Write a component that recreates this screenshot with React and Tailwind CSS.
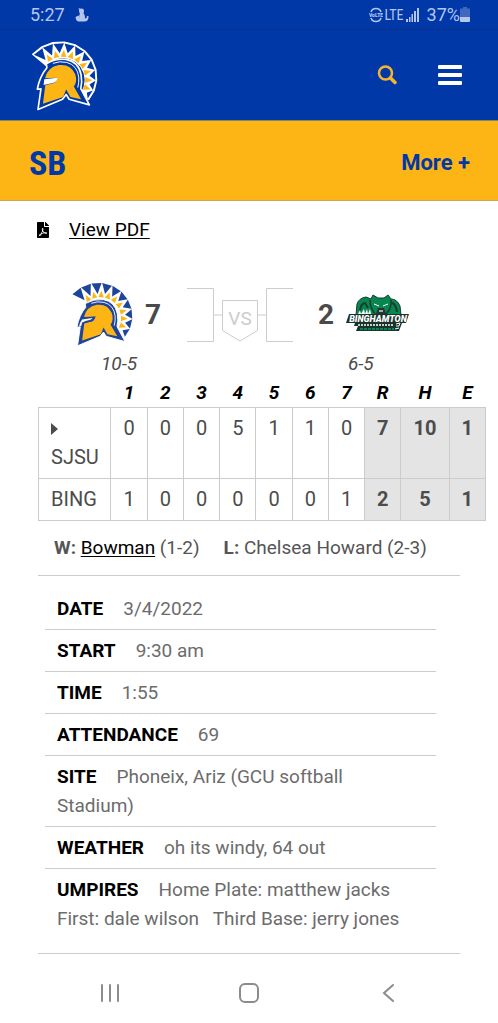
import React from 'react';
import { FaFilePdf } from 'react-icons/fa';

const innings = ['1', '2', '3', '4', '5', '6', '7'];

const teams = [
  { name: 'SJSU', batting: true, runs: [0, 0, 0, 5, 1, 1, 0], totals: [7, 10, 1] },
  { name: 'BING', batting: false, runs: [1, 0, 0, 0, 0, 0, 1], totals: [2, 5, 1] },
];

const details = [
  { label: 'Date', value: '3/4/2022' },
  { label: 'Start', value: '9:30 am' },
  { label: 'Time', value: '1:55' },
  { label: 'Attendance', value: '69' },
  { label: 'Site', value: 'Phoneix, Ariz (GCU softball Stadium)' },
  { label: 'Weather', value: 'oh its windy, 64 out' },
  { label: 'Umpires', value: 'Home Plate: matthew jacks First: dale wilson \u00a0 Third Base: jerry jones' },
];

// Point on the helmet crest, angle in degrees
const crestPoint = (radius, angle) => {
  const rad = (angle * Math.PI) / 180;
  return `${(128 + radius * Math.cos(rad)).toFixed(1)},${(150 + radius * Math.sin(rad)).toFixed(1)}`;
};

const TEETH = 10;
const START = -140;
const STEP = 17.8;
const outerRadius = (i) => 116 - i * 1.5;

const SpartanLogo = ({ className, outlined }) => {
  const blue = outlined ? '#0038a8' : '#1f449c';
  const teeth = [...Array(TEETH)].map((_, i) => i);
  const outer = [...Array(TEETH + 1)].map((_, i) => crestPoint(outerRadius(i), START + i * STEP));
  const inner = [...Array(TEETH + 1)].map((_, i) => crestPoint(62 + i, START + i * STEP)).reverse();

  return (
    <svg viewBox="34 30 202 216" className={className} role="img" aria-label="San Jose State Spartans">
      <polygon
        points={[...outer, ...inner].join(' ')}
        fill="#fff"
        stroke="#fff"
        strokeWidth={outlined ? 4 : 0}
        strokeLinejoin="round"
      />
      {teeth.map((i) => (
        <polygon
          key={i}
          fill={blue}
          points={[
            crestPoint(outerRadius(i) - (outlined ? 4 : -2), START + i * STEP + 0.5),
            crestPoint(outerRadius(i + 1) - (outlined ? 4 : -2), START + (i + 1) * STEP - 0.5),
            crestPoint(76 + i, START + (i + 0.5) * STEP),
          ].join(' ')}
        />
      ))}
      {teeth.slice(1).map((i) => (
        <polygon
          key={i}
          fill="#fdb515"
          points={[
            crestPoint(66 + i * 0.5, START + (i - 0.42) * STEP),
            crestPoint(66 + i * 0.5, START + (i + 0.42) * STEP),
            crestPoint(87 + i * 0.5, START + i * STEP),
          ].join(' ')}
        />
      ))}
      {/* helmet shell */}
      <path
        d="M53 181 Q60 142 82 116 L80 104 Q108 88 139 91 Q177 97 185 137 Q189 160 184 179 L210 228 L149 211 L140 197 L129 211 L55 242 L64 180 Z"
        fill={blue}
        stroke="#fff"
        strokeWidth={outlined ? 5 : 3}
        strokeLinejoin="round"
      />
      <path d="M100 103 Q120 95 142 100 Q174 109 178 145 Q179 162 175 176" fill="none" stroke="#fff" strokeWidth="3" />
      {/* face plate */}
      <path
        d="M76 148 Q84 114 118 108 Q153 104 167 135 Q175 158 163 173 L185 211 L153 204 L140 182 L131 204 L70 225 L77 169 L106 161 L113 146 Z"
        fill="#fdb515"
      />
      <path d="M74 151 L114 146 Q111 161 96 163 L72 168 Z" fill={outlined ? '#fff' : blue} />
      {!outlined && <path d="M60 178 Q63 165 70 156 L104 151 Q100 158 84 160 L70 166 L67 177 Z" fill="#fff" />}
    </svg>
  );
};

const BearcatsLogo = ({ className }) => (
  <svg viewBox="0 0 64 40" className={className} role="img" aria-label="Binghamton Bearcats">
    <path
      d="M10 21 L11 10 Q13 4 20 3 L25 5 L27 1 L32 4 L38 4 L42 1 L45 5 Q51 5 54 12 L55 21 Z"
      fill="#07864f"
      stroke="#173c30"
      strokeWidth="1"
    />
    <path d="M14 18 Q14 10 19 9 L22 14 M46 9 Q50 10 51 18" fill="none" stroke="#173c30" strokeWidth="2" />
    <path d="M24 6 Q24 14 29 20 M45 6 Q46 14 40 20" fill="none" stroke="#173c30" strokeWidth="1.500" />
    <path d="M28 10 L33 12 M42 10 L37 12" stroke="#fff" strokeWidth="1" />
    <path d="M32 14 H38 L40 20 H30 Z" fill="#26332e" />
    <path d="M33 16 H37 V18 H33 Z" fill="#a5a9a9" />
    <path d="M12 20 L14 16 L15 20 L18 15 L19 20 L21 15 L22 20 L24 15 L25 20 Z" fill="#fff" />
    {/* name plate */}
    <path d="M3 20 H63 L60 29 H56 L53 37 H10 L12 32 H8 L9 29 H0 Z" fill="#18342b" />
    <text x="32" y="28" textAnchor="middle" fill="#fff" fontSize="9" fontWeight="900" fontStyle="italic" fontFamily="Roboto, sans-serif">
      BINGHAMTON
    </text>
    <path d="M12 31 H48" stroke="#c5cfcb" strokeWidth="2" strokeDasharray="2 1" />
    <path d="M14 35 H48" stroke="#07864f" strokeWidth="2" strokeDasharray="3 1" />
    <path d="M50 30 L54 29 L53 32 L50 32 M49 35 L53 34" fill="none" stroke="#fff" strokeWidth="1" />
  </svg>
);

const StatusBar = () => (
  <div className="flex h-[30px] items-center justify-between border-b border-[#0a2f86] bg-[#0038a8] pr-7 pl-[30px] text-[#b4c5f0]">
    <div className="flex items-center gap-2.5">
      <span className="text-[18px] leading-5">5:27</span>
      <svg viewBox="0 0 14 14" className="h-3.5 w-3.5" fill="currentColor" aria-hidden="true">
        <circle cx="6.500" cy="3" r="2.500" />
        <path d="M3.500 0 L6 1 L4.500 3 Z" />
        <path d="M5 5 H8.500 Q10.500 8 10 11 H4.500 Q3.500 8 5 5 Z" />
        <path d="M0.500 9 L3.500 7.500 L5 10.500 H10 Q12 10.500 12 8 L13.500 8 Q14 13.500 9 13.500 H4 Q1 13.500 0.500 9 Z" />
      </svg>
    </div>
    <div className="flex items-center">
      <svg viewBox="0 0 14 16" className="h-4 w-3.5" aria-hidden="true">
        <path d="M2 5 Q3 1.500 7 1.500 Q11 1.500 12 5 M2 11 Q3 14.500 7 14.500 Q11 14.500 12 11" fill="none" stroke="currentColor" strokeWidth="1.500" />
        <text x="7" y="10" textAnchor="middle" fontSize="5" fontWeight="900" fontFamily="Roboto, sans-serif" fill="currentColor">VoLTE</text>
      </svg>
      <span className="ml-0.5 font-['Roboto_Condensed',Roboto,sans-serif] text-[14px] leading-4">LTE</span>
      <svg viewBox="0 0 13 14" className="ml-0.5 h-3.5 w-[13px]" fill="currentColor" aria-hidden="true">
        <path d="M0 11h2v3H0zM3 9h1.500v5H3zM5.500 6H7v8H5.500zM8 3h2v11H8zM11 0h2v14h-2z" />
      </svg>
      <span className="ml-2 text-[18px] leading-5">37%</span>
      <svg viewBox="0 0 10 15" className="h-[15px] w-2.5" fill="currentColor" aria-hidden="true">
        <path d="M3 0h4v1.500h3V10H0V1.500h3z" opacity="0.350" />
        <path d="M0 10h10v4a1 1 0 0 1-1 1H1a1 1 0 0 1-1-1z" />
      </svg>
    </div>
  </div>
);

const Header = () => (
  <header className="flex h-[91px] items-center justify-between border-b border-[#8c8559] bg-[#0038a8] pr-9 pl-[31px]">
    <a href="#home">
      <SpartanLogo outlined className="h-[72px] w-[67px]" />
    </a>
    <div className="flex items-center gap-10">
      <button type="button" aria-label="Search" className="text-[#f6b431]">
        <svg viewBox="0 0 21 21" className="h-[21px] w-[21px]" fill="none" stroke="currentColor" strokeLinecap="round" aria-hidden="true">
          <circle cx="8.500" cy="8" r="6.500" strokeWidth="2.500" />
          <path d="M13.500 13 L18 17.500" strokeWidth="3.500" />
        </svg>
      </button>
      <button type="button" aria-label="Menu" className="text-white">
        <svg viewBox="0 0 24 20" className="h-5 w-6" fill="currentColor" aria-hidden="true">
          <rect y="0" width="24" height="4" rx="1" />
          <rect y="8" width="24" height="4" rx="1" />
          <rect y="16" width="24" height="4" rx="1" />
        </svg>
      </button>
    </div>
  </header>
);

const VersusBracket = () => (
  <svg viewBox="0 0 106 56" className="h-14 w-[106px]" fill="none" stroke="#ccc" aria-label="versus">
    <path d="M0 1.500 H26.500 V54.500 H0 M26.500 28 H35.500 M106 1.500 H79.500 V54.500 H106 M79.500 28 H70.500" />
    <path d="M35.500 13.500 H70.500 V43.500 L53 54 L35.500 43.500 Z" />
    <text x="53" y="38" textAnchor="middle" fontSize="19" fontFamily="Roboto, sans-serif" fill="#ccc" stroke="none">VS</text>
  </svg>
);

const LineScore = () => (
  <table className="w-full border-collapse text-center text-[20px] text-[#4c4c4c]">
    <colgroup>
      <col className="w-[72px]" />
      {innings.map((inning) => (
        <col key={inning} className="w-9" />
      ))}
      <col className="w-9" />
      <col className="w-12" />
      <col className="w-9" />
    </colgroup>
    <thead>
      <tr className="text-black italic">
        <td></td>
        {[...innings, 'R', 'H', 'E'].map((heading) => (
          <th key={heading} scope="col" className="text-[19px] leading-[29px] font-bold">{heading}</th>
        ))}
      </tr>
    </thead>
    <tbody>
      {teams.map((team) => (
        <tr key={team.name} className="align-top">
          <th scope="row" className="border border-[#ccc] py-1.5 pl-3 text-left font-normal">
            {team.batting && (
              <span className="flex h-[29px] items-center">
                <svg viewBox="0 0 7 12" className="h-3 w-[7px]" fill="currentColor" aria-hidden="true">
                  <path d="M0 0 L7 6 L0 12 Z" />
                </svg>
              </span>
            )}
            {team.name}
          </th>
          {team.runs.map((run, i) => (
            <td key={i} className="border border-[#ccc] py-1.5">{run}</td>
          ))}
          {team.totals.map((total, i) => (
            <td key={i} className="border border-[#ccc] bg-[#e4e4e4] py-1.5 font-bold">{total}</td>
          ))}
        </tr>
      ))}
    </tbody>
  </table>
);

const NavigationBar = () => (
  <nav className="flex h-[68px] items-center justify-around px-10 pt-2.5 text-[#8c8c8c]">
    <button type="button" aria-label="Recent apps">
      <svg viewBox="0 0 20 20" className="h-5 w-5" fill="none" stroke="currentColor" strokeWidth="2" strokeLinecap="round">
        <path d="M2 2 V18 M10 2 V18 M18 2 V18" />
      </svg>
    </button>
    <button type="button" aria-label="Home">
      <svg viewBox="0 0 20 20" className="h-5 w-5" fill="none" stroke="currentColor" strokeWidth="2">
        <rect x="1" y="1" width="18" height="18" rx="5" />
      </svg>
    </button>
    <button type="button" aria-label="Back">
      <svg viewBox="0 0 20 20" className="h-5 w-5" fill="none" stroke="currentColor" strokeWidth="2" strokeLinecap="round">
        <path d="M15 2 L6 10 L15 18" />
      </svg>
    </button>
  </nav>
);

const App = () => {
  return (
    <div className="bg-white font-['Roboto',sans-serif] text-[19px] leading-[29px]">
      <StatusBar />
      <Header />

      {/* Sport bar */}
      <div className="flex h-20 items-center justify-between border-b border-[#c9a45a] bg-[#fdb515] pt-1 pr-7 pl-[29px] font-bold text-[#0038a8]">
        <h1 className="font-['Roboto_Condensed',Roboto,sans-serif] text-[34px] leading-10">SB</h1>
        <button type="button" className="text-[22px]">More +</button>
      </div>

      <main>
        <div className="flex items-center gap-5 pt-3.5 pl-[37px]">
          <FaFilePdf className="w-3" size={16} />
          <a href="#pdf" className="text-black underline underline-offset-2">View PDF</a>
        </div>

        {/* Score */}
        <div className="flex items-start justify-between pt-[38px] pr-[88px] pl-[71px]">
          <div className="flex flex-col">
            <div className="flex h-16 items-center gap-3">
              <SpartanLogo className="h-[66px] w-[62px]" />
              <span className="text-[28px] font-bold text-[#4a4a4a]">7</span>
            </div>
            <span className="pt-[3px] pl-[30px] text-[#4c4c4c] italic">10-5</span>
          </div>
          <div className="flex h-[66px] items-center">
            <VersusBracket />
          </div>
          <div className="flex flex-col">
            <div className="flex h-16 items-center gap-3">
              <span className="text-[28px] font-bold text-[#4a4a4a]">2</span>
              <BearcatsLogo className="h-10 w-16" />
            </div>
            <span className="pt-[3px] pl-[30px] text-[#4c4c4c] italic">6-5</span>
          </div>
        </div>

        <div className="pr-3 pl-[38px]">
          <LineScore />
        </div>

        {/* Pitchers of record */}
        <div className="mx-[38px] flex gap-6 border-b border-[#ccc] pt-3 pb-[13px] pl-4 text-[#555]">
          <p>
            <strong>W:</strong> <a href="#bowman" className="text-black underline underline-offset-2">Bowman</a> (1-2)
          </p>
          <p>
            <strong>L:</strong> Chelsea Howard (2-3)
          </p>
        </div>

        {/* Game details */}
        <div className="mx-[38px] border-b border-[#ccc] pt-3 pr-6 pb-3.5 pl-[7px]">
          <dl className="divide-y divide-[#ccc]">
            {details.map((item) => (
              <div key={item.label} className="py-1.5 pr-6 pl-3">
                <dt className="mr-5 inline font-bold text-black uppercase">{item.label}</dt>
                <dd className="inline text-[#6c6c6c]">{item.value}</dd>
              </div>
            ))}
          </dl>
        </div>
      </main>

      <NavigationBar />
    </div>
  );
};

export default App;
